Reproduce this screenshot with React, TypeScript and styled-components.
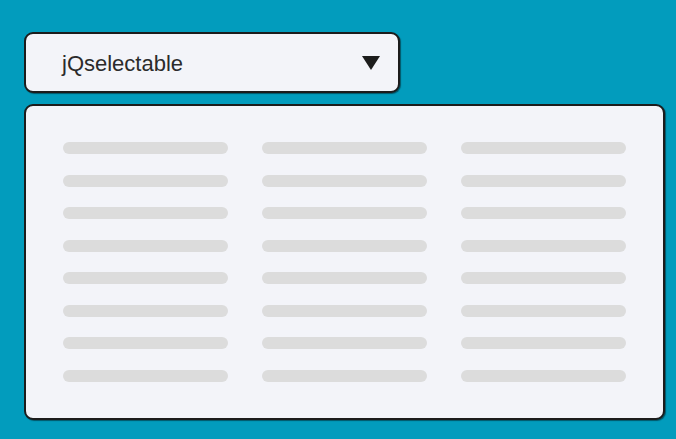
import styled, { createGlobalStyle } from 'styled-components';

const GlobalStyle = createGlobalStyle`
  html, body {
    margin: 0;
    padding: 0;
    background: #029cbd;
  }
  body {
    font-family: 'Liberation Sans', Arial, sans-serif;
  }
`;

const COLUMNS = 3;
const ROWS = 8;

function App() {
  return (
    <>
      <GlobalStyle />
      <Page>
        <Select>
          <Label>jQselectable</Label>
          <Caret viewBox="0 0 18 14">
            <path d="M0 0 H18 L9 14 Z" fill="#1c1c1c" />
          </Caret>
        </Select>
        <Panel>
          {Array.from({ length: COLUMNS }).map((_, col) => (
            <Column key={col}>
              {Array.from({ length: ROWS }).map((__, row) => (
                <Bar key={row} />
              ))}
            </Column>
          ))}
        </Panel>
      </Page>
    </>
  );
}

export default App;

const Page = styled.div`
  display: flex;
  flex-direction: column;
  align-items: flex-start;
  gap: 11px;
  width: 676px;
  height: 439px;
  padding: 32px 0 0 24px;
  box-sizing: border-box;
`;

const Select = styled.div`
  display: flex;
  align-items: center;
  justify-content: space-between;
  width: 376px;
  height: 61px;
  box-sizing: border-box;
  padding: 0 18px 0 36px;
  background: #f3f4f9;
  border: 2px solid #1c1c1c;
  border-radius: 9px;
  box-shadow: 1px 1px 1px rgba(0, 0, 0, 0.45);
`;

const Label = styled.span`
  font-size: 22px;
  color: #2b2b2b;
  margin-top: 2px;
`;

const Caret = styled.svg`
  width: 18px;
  height: 14px;
`;

const Panel = styled.div`
  display: flex;
  justify-content: space-between;
  width: 641px;
  height: 316px;
  box-sizing: border-box;
  padding: 36px 37px 0 37px;
  background: #f3f4f9;
  border: 2px solid #1c1c1c;
  border-radius: 9px;
  box-shadow: 1px 1px 1px rgba(0, 0, 0, 0.45);
`;

const Column = styled.div`
  display: flex;
  flex-direction: column;
  gap: 20.5px;
  width: 165px;
`;

const Bar = styled.div`
  height: 12px;
  border-radius: 6px;
  background: #dcdcdc;
`;
